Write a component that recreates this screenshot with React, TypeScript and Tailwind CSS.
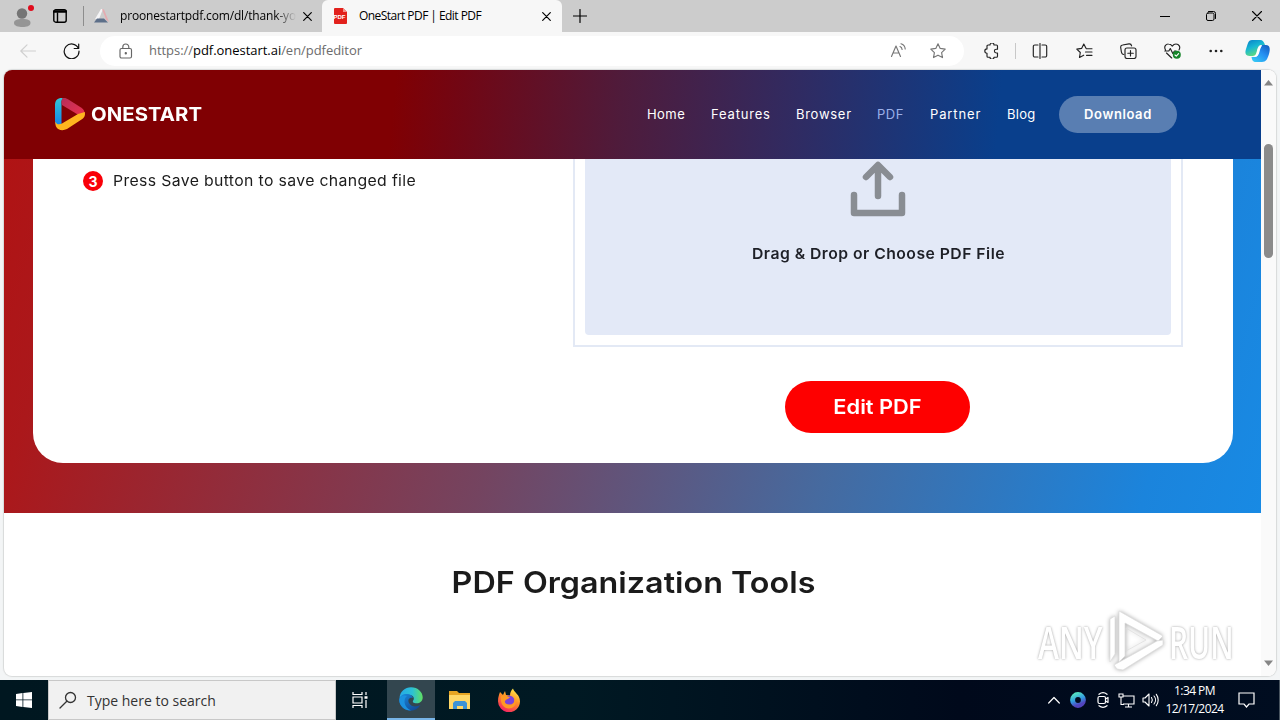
import type { ReactNode } from 'react';

const stroke = { fill: 'none', stroke: 'currentColor', strokeLinecap: 'round', strokeLinejoin: 'round' } as const;

function Close() {
  return (
    <svg width="9" height="9" viewBox="0 0 9 9" {...stroke} strokeWidth="1.2"><path d="M.7.7l7.6 7.6M8.3.7L.7 8.3" /></svg>
  );
}

function TabStrip() {
  return (
    <div className="flex h-8 shrink-0 items-center bg-[#cccccc] text-[12px] text-black">
      <svg className="ml-3 shrink-0" width="24" height="28" viewBox="0 0 24 28">
        <circle cx="10" cy="11.500" r="5.200" fill="#757575" />
        <path d="M2 21c0-3 3-4 8.500-4s8 1 8 4-4 4-8 4-8.500-1-8.500-4z" fill="#959595" />
        <circle cx="19" cy="6" r="3" fill="#e00b1c" />
      </svg>
      <svg className="ml-[17px] shrink-0" width="14" height="14" viewBox="0 0 14 14" {...stroke} strokeWidth="1.400"><rect x=".8" y=".8" width="12.400" height="12.400" rx="2" /><path d="M1 2.500h12" strokeWidth="2.500" /><path d="M4.500 4v9" /></svg>
      <div className="ml-4 h-5 w-px shrink-0 bg-[#8d8d8d]" />
      <svg className="ml-[9px] shrink-0" width="18" height="18" viewBox="0 0 18 18">
        <path d="M8 2h2L6 12H2z" fill="#f4f4f6" /><path d="M9 2l2 .5L16 15l-3-2.500z" fill="#e5abb0" /><path d="M4 11.500h7l4 4H1z" fill="#5d6f89" />
      </svg>
      <div className="ml-[9px] w-[178px] whitespace-nowrap bg-[linear-gradient(90deg,#000_0,#000_87%,#cccccc_99%)] bg-clip-text font-['Open_Sans',sans-serif] tracking-[-0.160px] text-transparent">proonestartpdf.com/dl/thank-yo</div>
      <div className="ml-[5px] shrink-0"><Close /></div>
      <div className="ml-[10px] flex h-8 w-[240px] shrink-0 items-center rounded-t-md bg-[#f7f7f7]">
        <svg className="ml-[11px]" width="14" height="16" viewBox="0 0 14 16">
          <path d="M2 0h8l4 4v11a1 1 0 0 1-1 1H2a1 1 0 0 1-1-1V1a1 1 0 0 1 1-1z" fill="#e2211c" /><path d="M10 0v4h4z" fill="#f78e88" />
          <text x="0.500" y="10.500" fontSize="6" fontWeight="700" fontFamily="Liberation Sans, sans-serif" fill="#fff">PDF</text>
        </svg>
        <span className="ml-[12px] w-[183px] whitespace-nowrap font-['Open_Sans',sans-serif] tracking-[-0.550px]">OneStart PDF | Edit PDF</span>
        <Close />
      </div>
      <svg className="ml-[11px]" width="14" height="14" viewBox="0 0 14 14" {...stroke} strokeWidth="1.200"><path d="M7 .5v13M.5 7h13" /></svg>
      <div className="ml-auto mr-[18px] flex items-center">
        <svg width="10" height="10" viewBox="0 0 10 10" {...stroke} strokeWidth="1"><path d="M0 5.500h10" /></svg>
        <svg className="ml-[36px]" width="10" height="10" viewBox="0 0 10 10" {...stroke} strokeWidth="1"><rect x=".5" y="2" width="7.500" height="7.500" rx="1.500" /><path d="M2.500.5h5a2 2 0 0 1 2 2v5" /></svg>
        <svg className="ml-[36px]" width="10" height="10" viewBox="0 0 10 10" {...stroke} strokeWidth="1.100"><path d="M.5.5l9 9M9.500.5l-9 9" /></svg>
      </div>
    </div>
  );
}

function Tool({ w, ml, children }: { w: number; ml: string; children: ReactNode }) {
  return <svg className={`shrink-0 ${ml}`} width={w} height="16" viewBox={`0 0 ${w} 16`} {...stroke} strokeWidth="1.150">{children}</svg>;
}

const star = 'M8 .8l2.200 4.600 5 .7-3.600 3.500.9 5L8 12.200l-4.500 2.400.9-5L.8 6.100l5-.7z';

function Toolbar() {
  return (
    <div className="flex h-[38px] shrink-0 items-center bg-[#f7f7f7] text-[#222]">
      <Tool w={16} ml="ml-5 text-[#cfcfcf]"><path d="M15.500 8H.8M7 1.800L.8 8 7 14.200" /></Tool>
      <Tool w={17} ml="ml-[27px] text-[#111]"><path d="M15.300 5.200A7.400 7.400 0 1 0 16 8M15.700 1v4.500h-4.500" strokeWidth="1.200" /></Tool>
      <div className="ml-[20px] flex h-[30px] w-[864px] shrink-0 items-center rounded-full bg-white text-[#666]">
        <Tool w={14} ml="ml-[19px]"><rect x="1" y="5.500" width="11.500" height="9.500" rx="1.500" /><path d="M3.800 5.300V4a3 3 0 0 1 6 0v1.300" /><circle cx="6.800" cy="10.200" r=".6" fill="currentColor" /></Tool>
        <span className="ml-[16px] w-[725px] whitespace-nowrap font-['Open_Sans',sans-serif] text-[13px] tracking-[-0.040px] text-[#6c6c6c]">https://<span className="text-black">pdf.onestart.ai</span>/en/pdfeditor</span>
        <Tool w={17} ml="ml-[16px] text-[#777]"><path d="M1.500 13.500L6 3l4.500 10.500M3 10h6M10 3.500c1.200.5 2 1.500 2.100 3M11 .8c2.500.8 4 2.700 4.200 5.200" /></Tool>
        <Tool w={16} ml="ml-[23px] text-[#777]"><path d={star} /></Tool>
      </div>
      <Tool w={16} ml="ml-[19px]"><path d="M4 3.500A1.300 1.300 0 0 1 5.300 2H7a2 2 0 0 1 4 0h2.500a1 1 0 0 1 1 1v3.200h-1.200a1.900 1.900 0 0 0 0 3.800h1.200v3.200a1 1 0 0 1-1 1H11a2 2 0 0 1-4 0H5a1 1 0 0 1-1-1V10.300a2.200 2.200 0 0 1 0-4.400z" /></Tool>
      <div className="ml-[16px] h-4 w-px bg-[#c8c8c8]" />
      <Tool w={16} ml="ml-[16px]"><path d="M6 2H2.800a1.500 1.500 0 0 0-1.500 1.500v9A1.500 1.500 0 0 0 2.800 14H6M10 2h3.200a1.500 1.500 0 0 1 1.500 1.500v9a1.500 1.500 0 0 1-1.500 1.500H10M8 .5v15" /></Tool>
      <Tool w={17} ml="ml-[28px]"><path d="M10 5.300L7.800 1 5.600 5.400.8 6.100l3.500 3.400-.8 5 4.200-2.300M10.500 5.700h5.500M9.500 9h6.500M10.500 12.300h5.500" /></Tool>
      <Tool w={17} ml="ml-[27px]"><rect x="5" y="5" width="11" height="10.500" rx="2" /><path d="M10.500 7.500v5.500M7.800 10.200h5.500M3.800 11.500C2 11.500 1.700 10.500 1.400 9L.7 4.500C.5 3 1.200 2.200 2.600 2L9 .9c1.500-.2 2.300.5 2.600 2" /></Tool>
      <Tool w={17} ml="ml-[27px]"><path d="M1.500 7C-.5 3.500 2 .9 4.500 1c1.800 0 3 1 3.800 2.100C9.200 1.800 10.500 1 12 1c3 0 4.800 3 3 6M.8 8h4l1.500-2.500 2.500 5L10.500 8H12M2.500 10l5.200 5" /><circle cx="12.800" cy="11.800" r="4" fill="#16842a" stroke="none" /><path d="M11 12l1.300 1.200 2.300-2.500" stroke="#fff" /></Tool>
      <Tool w={14} ml="ml-[28px]"><g fill="currentColor" stroke="none"><circle cx="1.700" cy="8" r="1.300" /><circle cx="7" cy="8" r="1.300" /><circle cx="12.300" cy="8" r="1.300" /></g></Tool>
      <svg className="ml-[22px] shrink-0" width="26" height="24" viewBox="0 0 26 24">
        <defs><linearGradient id="cp" x2=".5" y2="1"><stop stopColor="#087dc8" /><stop offset=".5" stopColor="#17b7d3" /><stop offset="1" stopColor="#66de78" /></linearGradient><linearGradient id="cq" x1="1" x2=".2" y2="1"><stop stopColor="#1457b8" /><stop offset=".5" stopColor="#258ff2" /><stop offset="1" stopColor="#36c7f5" /></linearGradient></defs>
        <path d="M17 6h4c4 0 4.500 4 3 9s-3 8-7 8h-6c-3 0-4-2-4.500-5H10c3 0 3-3 4-7z" fill="url(#cq)" />
        <path d="M7 1h8c3 0 4 2 5 5h-4c-3 0-3.500 4-4.500 7.500S9 17 6 17C-1 17 0 13 1.500 8.500S3.500 1 7 1z" fill="url(#cp)" />
        <path d="M16 6.500c-2 .5-3 2.500-3.700 5-.8 3-1.500 5.500-3.800 6 2.500 1 5-.5 5.800-4 .7-2.500 1-4.500 2.700-7z" fill="#fff" />
      </svg>
    </div>
  );
}

function SiteHeader() {
  return (
    <header className="flex h-[89px] shrink-0 items-center bg-[linear-gradient(95deg,#800003_0%,#800003_31%,#720613_36%,#4f1b3b_49%,#302b62_63%,#093f8c_79%,#093f8c_100%)] font-[Inter,sans-serif] text-[13px] text-white">
      <svg className="ml-[50px] shrink-0" width="33" height="35" viewBox="0 0 33 35">
        <defs><linearGradient id="lb" x2="0" y2="1"><stop stopColor="#30c7d6" /><stop offset="1" stopColor="#147fec" /></linearGradient><linearGradient id="lr" x2="1" y2="1"><stop stopColor="#b52e58" /><stop offset="1" stopColor="#ee304d" /></linearGradient></defs>
        <path d="M1 8C1 3 4 .5 9 1 7 3 7.500 5 7.500 8v19L5 30c-3-2-4-3-4-7z" fill="url(#lb)" />
        <path d="M9 1c2-.3 3 .2 5 1.300l13 8.200c3 2 4 4 3.500 7.500L27 19.500 8 8C7 5 7.500 2.500 9 1z" fill="url(#lr)" />
        <path d="M30.800 15c.7 4-.8 6-3.300 7.500L13 32c-4 2-9 1.500-11-2.500-.8-2-.7-4-.5-5C2.500 27.500 5 28 8 26.500L24 17z" fill="#ffb51f" />
      </svg>
      <span className="ml-[4px] mt-px w-[112px] origin-left scale-x-[1.070] whitespace-nowrap text-[19px] font-bold tracking-[0.050px]">ONESTART</span>
      <nav className="ml-auto mr-[84px] flex shrink-0 items-center whitespace-nowrap">
        <span className="w-16 tracking-[0.450px]">Home</span>
        <span className="w-[85px] tracking-[0.820px]">Features</span>
        <span className="w-[81px] tracking-[0.720px]">Browser</span>
        <span className="w-[53px] tracking-[0.550px] text-[#9cb0e8]">PDF</span>
        <span className="w-[77px] tracking-[0.880px]">Partner</span>
        <span className="w-[52px] tracking-[0.250px]">Blog</span>
        <button className="h-[37px] w-[118px] rounded-full bg-[#597eb2] font-semibold tracking-[0.600px]">Download</button>
      </nav>
    </header>
  );
}

function Hero() {
  return (
    <section className="h-[354px] shrink-0 bg-[linear-gradient(106deg,#b01314_0%,#ab181b_7%,#744460_42%,#466a9f_67%,#1b84dc_91%,#188ae4_100%)] pb-[50px] pl-[29px] pr-[28px] font-[Inter,sans-serif]">
      <div className="flex h-[304px] rounded-b-[30px] bg-white">
        <div className="flex w-[540px] shrink-0 items-start pl-[50px] pt-3 text-[#1b1b1b]">
          <span className="flex size-5 items-center justify-center rounded-full bg-[#f90008] text-[14px] font-bold text-white">3</span>
          <span className="ml-[10px] origin-left scale-x-[1.054] whitespace-nowrap text-[15px] leading-5 tracking-[0.330px]">Press Save button to save changed file</span>
        </div>
        <div className="flex w-[610px] shrink-0 flex-col items-center">
          <div className="h-[188px] w-full border-x-2 border-b-2 border-[#e3e9f5] px-[10px] pb-[10px]">
            <div className="flex h-full flex-col items-center rounded-b bg-[#e3e9f7]">
              <svg className="mt-[2px] shrink-0" width="56" height="56" viewBox="0 0 56 56" fill="none" stroke="#898d93" strokeWidth="6.500" strokeLinecap="round" strokeLinejoin="round"><path d="M28 35V5M16 16L28 4l12 12M4 34v18h48V34" /></svg>
              <span className="mt-[25px] scale-x-[1.050] whitespace-nowrap text-[15px] font-semibold leading-6 tracking-[0.440px] text-[#1e2027]">Drag &amp; Drop or Choose PDF File</span>
            </div>
          </div>
          <button className="mr-px mt-[34px] h-[52px] w-[185px] rounded-full bg-[#fe0000] text-[20px] font-semibold text-white"><span className="inline-block scale-x-[1.090]">Edit PDF</span></button>
        </div>
      </div>
    </section>
  );
}

function Watermark() {
  return (
    <div className="flex h-[62px] items-center font-['Open_Sans',sans-serif] text-[46px] font-semibold text-white [text-shadow:0_0_3px_#999]">
      <span className="flex w-[70px]"><span className="origin-left scale-x-[0.690]">ANY</span></span>
      <svg className="overflow-visible drop-shadow-[0_0_2px_#aaa]" width="58" height="62" viewBox="0 0 58 62" fill="#fff" stroke="#ddd" strokeWidth=".7" strokeLinejoin="round">
        <path d="M2 9l5-3v38l-5 8z" /><path d="M11 1l44 25-5 5-33-18v33l-6 6z" /><path d="M6 55l43-24 6-1v5L15 60l-6-1z" /><path d="M18 18l20 12-20 11z" fill="none" />
      </svg>
      <span className="ml-[3px] flex w-[67px]"><span className="origin-left scale-x-[0.650]">RUN</span></span>
    </div>
  );
}

function Taskbar() {
  return (
    <div className="flex h-10 shrink-0 items-center bg-[linear-gradient(90deg,#001720_0%,#001923_45%,#00091b_75%,#000d20_100%)] text-white">
      <svg className="ml-4 shrink-0" width="16" height="16" viewBox="0 0 16 16" fill="#fff"><path d="M0 2l6.500-1v6.500H0zM7.300.9L16 0v7.500H7.300zM0 8.300h6.500V15L0 14zM7.300 8.300H16V16l-8.700-1z" /></svg>
      <div className="ml-4 flex h-10 w-[288px] shrink-0 items-center border border-[#c8c8c8] bg-[#f1f1f1] text-[#333]">
        <svg className="ml-[10px]" width="18" height="18" viewBox="0 0 18 18" {...stroke} strokeWidth="1.300"><circle cx="11.500" cy="6.500" r="5" /><path d="M7.800 10.200L1 17" /></svg>
        <span className="ml-[10px] whitespace-nowrap font-['Open_Sans',sans-serif] text-[14px] tracking-[0]">Type here to search</span>
      </div>
      <svg className="ml-4 shrink-0" width="16" height="16" viewBox="0 0 16 16" fill="none" stroke="#fff" strokeWidth="1.200"><path d="M1 0v2.500h9V0M1 16v-2.500h9V16M1 5h9v6H1zM14 0v3M14 8v8" /><path d="M12.500 5.500h3" strokeWidth="2.500" /></svg>
      <div className="ml-[19px] flex h-10 w-12 shrink-0 items-center justify-center border-b-2 border-[#78b5e8] bg-[#33464f]">
        <svg width="24" height="24" viewBox="0 0 24 24">
          <defs><linearGradient id="eg"><stop stopColor="#25a9e8" /><stop offset=".55" stopColor="#2cc1d5" /><stop offset="1" stopColor="#60e062" /></linearGradient><linearGradient id="eb" x2="1" y2="1"><stop stopColor="#198de1" /><stop offset="1" stopColor="#123f89" /></linearGradient></defs>
          <path d="M.5 11C1 4.500 6 .3 12 .3c7 0 11.700 5 11.700 10 0 4-3 6-6 6-3.500 0-4.500-1.200-3.500-2.700 1.600-2 .5-5.600-4-5.600C5 8 1.500 10 .5 11z" fill="url(#eg)" />
          <path d="M.3 13C.5 8 5 6.500 9 7c3 .4 4.500 2 5 4-4-1-5.500 2-4 5 2.500 4.500 8 4 11.500 2C19 22 16 23.700 12 23.700 5 23.700.3 18.500.3 13z" fill="url(#eb)" />
          <path d="M8 9c-4 3-3.500 11 4 14.500C5 23.500.3 18.500.3 13 .5 9 5 7.500 8 9z" fill="#1b91df" />
        </svg>
      </div>
      <svg className="ml-[14px] shrink-0" width="22" height="20" viewBox="0 0 22 20"><path d="M0 1h8l2 2h11v16H0z" fill="#e7a523" /><path d="M0 5h21v14H0z" fill="#ffd767" /><path d="M4 19v-6l2-2h10l2 2v6h-4v-3H8v3z" fill="#3d93d6" /></svg>
      <svg className="ml-[26px] shrink-0" width="24" height="24" viewBox="0 0 24 24">
        <defs><linearGradient id="ff" x1=".8" x2=".3" y2="1"><stop stopColor="#fff04c" /><stop offset=".45" stopColor="#ff9126" /><stop offset="1" stopColor="#f51f64" /></linearGradient></defs>
        <path d="M3 4l3 3 2-4 1 4 4 .5c0-3 1-5 3-7 1 4 7 6 7 13A11 11 0 0 1 1 13C1 9 2 7 3 4z" fill="url(#ff)" />
        <circle cx="12" cy="13" r="5.500" fill="#7b43db" /><path d="M4 8c4-2 6 1 9 1-1 2-4 2-5 4s2 4 5 3.500 5-2 4-6c4 4 1 10-5 10S3 15 4 8z" fill="#ff9924" />
      </svg>
      <div className="ml-auto flex shrink-0 items-center">
        <svg width="12" height="8" viewBox="0 0 12 8" {...stroke} strokeWidth="1.200"><path d="M.7 7L6 1.500 11.300 7" /></svg>
        <svg className="ml-[10px]" width="16" height="16" viewBox="0 0 16 16" fill="none" strokeWidth="5"><defs><linearGradient id="tr" x2=".4" y2="1"><stop stopColor="#54e0c0" /><stop offset=".55" stopColor="#329be1" /><stop offset="1" stopColor="#5244bd" /></linearGradient></defs><circle cx="8" cy="8" r="5.400" stroke="url(#tr)" /></svg>
        <svg className="ml-[11px]" width="12" height="16" viewBox="0 0 12 16" {...stroke} strokeWidth="1.200"><rect x="1" y="4.500" width="7.500" height="7" rx="1.500" /><path d="M8.500 7l2.500-1.500v5L8.500 9M2 2.300c2.500-2 5.500-2 8 0M2 13.700c2.500 2 5.500 2 8 0" /></svg>
        <svg className="ml-[9px]" width="17" height="15" viewBox="0 0 17 15" fill="none" stroke="#fff" strokeWidth="1.100"><path d="M5 3h11v8H5M10.500 11v3M7 14h7M1 1h4v3H1zM3 4v7.500h3" /></svg>
        <svg className="ml-[7px]" width="17" height="14" viewBox="0 0 17 14" {...stroke} strokeWidth="1.100"><path d="M1 5h2l4-4v12L3 9H1zM9.500 4.500c1 1.500 1 3.500 0 5M12 3c2 2.300 2 5.700 0 8M14.300 1.300c2.500 3.300 2.500 8.100 0 11.400" /></svg>
        <div className="ml-[4px] w-[63px] whitespace-nowrap text-center font-['Open_Sans',sans-serif] text-[12px] leading-[18px] tracking-[-0.550px]"><div>1:34 PM</div><div>12/17/2024</div></div>
        <svg className="ml-[12px] mr-[24px]" width="17" height="16" viewBox="0 0 17 16" fill="none" stroke="#fff" strokeWidth="1.200"><path d="M1 1h15v11h-5l-2.500 3L6 12H1z" /></svg>
        <div className="h-10 w-px bg-[#48545f]" />
      </div>
    </div>
  );
}

export default function App() {
  return (
    <div className="flex h-[720px] w-[1280px] flex-col overflow-hidden bg-[#f3f5f6]">
      <TabStrip />
      <Toolbar />
      <main className="relative mb-1 ml-1 mr-[4px] flex h-[606px] shrink-0 overflow-hidden rounded-lg bg-white shadow-[0_0_1px_1px_#d8dada]">
        <div className="flex w-[1257px] shrink-0 flex-col">
          <SiteHeader />
          <Hero />
          <h2 className="mt-[48px] w-[1259px] scale-x-[1.095] whitespace-nowrap text-center font-[Inter,sans-serif] text-[29.500px] font-semibold leading-[42px] text-[#1b1b1b]">PDF Organization Tools</h2>
        </div>
        <div className="flex w-[15px] flex-col items-center bg-[#fafafa]">
          <svg className="mt-[10px]" width="9" height="6" fill="#858585"><path d="M0 5.500L4.500 0 9 5.500z" /></svg>
          <div className="mt-[58px] h-[114px] w-[9px] rounded-full bg-[#8b8b8b]" />
          <svg className="mb-[10px] mt-auto" width="9" height="6" fill="#858585"><path d="M0 .5L4.500 6 9 .5z" /></svg>
        </div>
        <div className="absolute bottom-[4px] right-[40px]"><Watermark /></div>
      </main>
      <Taskbar />
    </div>
  );
}
